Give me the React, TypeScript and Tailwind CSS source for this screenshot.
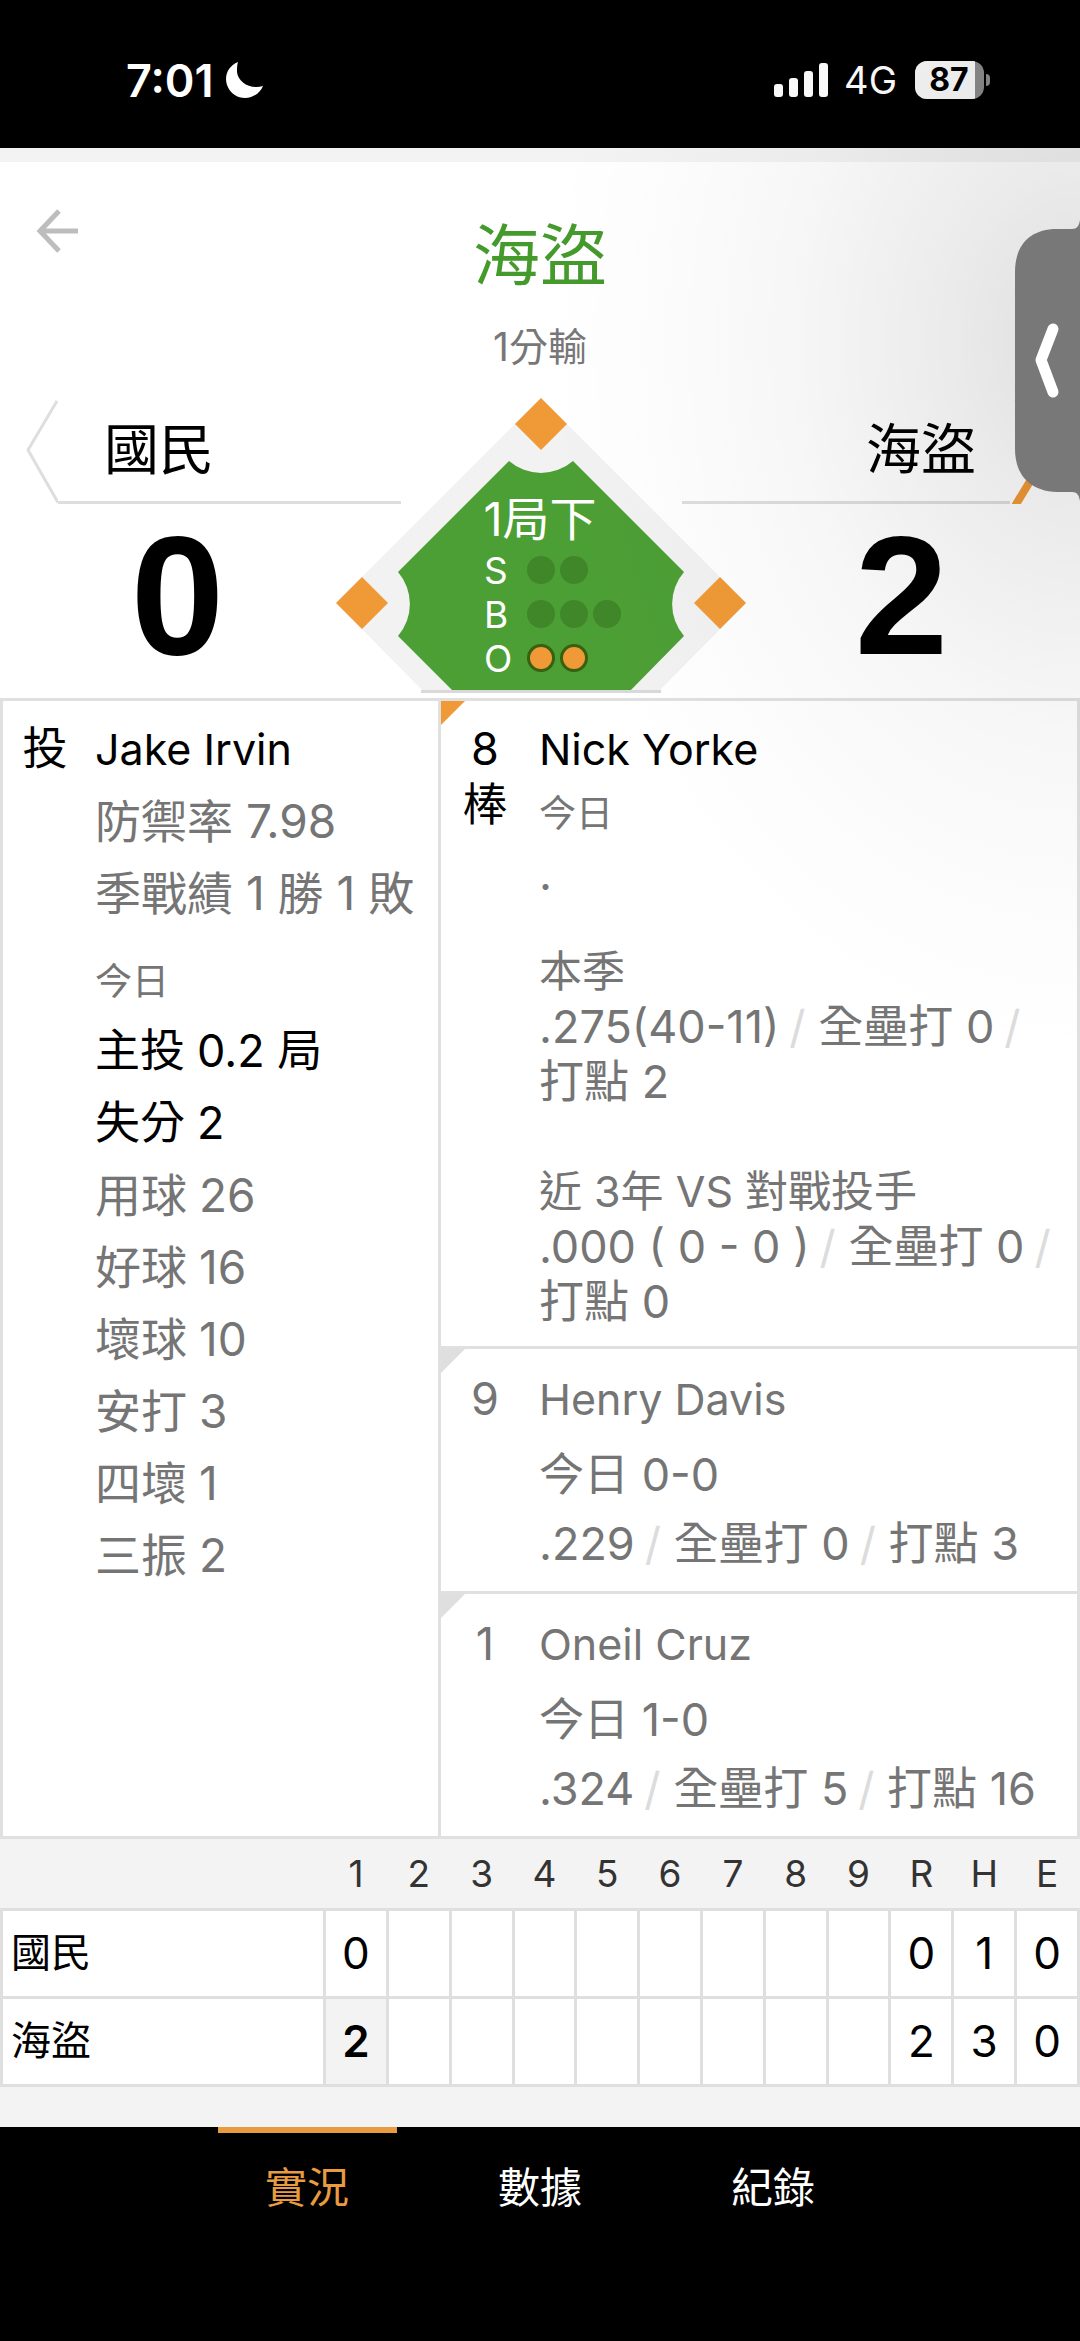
import React, { Fragment } from "react";

const pitcherToday = [
  { label: "主投", value: "0.2 局", strong: true },
  { label: "失分", value: "2", strong: true },
  { label: "用球", value: "26" },
  { label: "好球", value: "16" },
  { label: "壞球", value: "10" },
  { label: "安打", value: "3" },
  { label: "四壞", value: "1" },
  { label: "三振", value: "2" },
];

const onDeck = [
  { order: "9", name: "Henry Davis", today: "0-0", line: [".229", "全壘打 0", "打點 3"] },
  { order: "1", name: "Oneil Cruz", today: "1-0", line: [".324", "全壘打 5", "打點 16"] },
];

const innings = ["1", "2", "3", "4", "5", "6", "7", "8", "9"];

const teams = [
  { name: "國民", runs: ["0"], totals: ["0", "1", "0"], batting: false },
  { name: "海盜", runs: ["2"], totals: ["2", "3", "0"], batting: true },
];

function StatusBar() {
  return (
    <div className="flex h-[148px] items-center justify-between bg-black pt-3 pr-[90px] pl-[126px] text-white">
      <div className="flex items-center gap-3">
        <span className="text-[45px] leading-none font-semibold">7:01</span>
        <svg className="h-[38px] w-[38px]" viewBox="0 0 38 38" fill="white" aria-hidden="true">
          <path d="M13 1C3 5 -1 15 2 24C6 35 17 39 26 36C32 34 36 30 38 25C25 29 13 21 12 11C12 7 12 4 13 1Z" />
        </svg>
      </div>
      <div className="flex items-center">
        <svg className="h-[34px] w-[54px]" viewBox="0 0 54 34" fill="white" aria-hidden="true">
          <rect x="0" y="21" width="9" height="13" rx="3" />
          <rect x="15" y="15" width="9" height="19" rx="3" />
          <rect x="30" y="8" width="9" height="26" rx="3" />
          <rect x="45" y="0" width="9" height="34" rx="3" />
        </svg>
        <span className="ml-4 text-[38px] leading-none">4G</span>
        <div className="ml-[18px] flex h-[38px] w-[69px] overflow-hidden rounded-[12px] bg-[#8a8a8a]">
          <span className="flex w-[60px] items-center justify-center bg-[#f8f8f8] pl-2 text-[32px] leading-none font-bold text-black">
            87
          </span>
        </div>
        <span className="ml-[2px] h-3 w-1 rounded-r-full bg-[#8a8a8a]" />
      </div>
    </div>
  );
}

function Diamond() {
  const counts = [
    { label: "S", total: 2, on: false },
    { label: "B", total: 3, on: false },
    { label: "O", total: 2, on: true },
  ];
  return (
    <div className="absolute top-0 left-1/2 h-[296px] w-[412px] -translate-x-1/2">
      <svg className="absolute inset-0 h-full w-full" viewBox="0 0 412 296" aria-hidden="true">
        <path d="M207 0L412 205L325 293H89L2 205Z" fill="#f2f2f2" />
        <path
          d="M175 63A49 49 0 0 0 239 63L350 174A49 49 0 0 0 350 238L296 293H119L64 238A49 49 0 0 0 64 174Z"
          fill="#4c9f35"
        />
        <rect x="87" y="292" width="240" height="3" fill="#d9d9d9" />
        <g fill="#f09a37">
          <path d="M207 0L233 26L207 52L181 26Z" />
          <path d="M28 179L54 205L28 231L2 205Z" />
          <path d="M386 179L412 205L386 231L360 205Z" />
        </g>
      </svg>
      <div className="relative pt-[92px] text-white">
        <p className="text-center text-[47px] leading-[58px]">1局下</p>
        <dl className="pl-[150px]">
          {counts.map((c) => (
            <div key={c.label} className="flex h-[44px] items-center">
              <dt className="w-[43px] text-[37px] leading-none">{c.label}</dt>
              <dd className="flex gap-[5px]">
                {Array.from({ length: c.total }, (_, i) => (
                  <span
                    key={i}
                    className={
                      c.on
                        ? "h-7 w-7 rounded-full border-[3px] border-[#37600f] bg-[#f09a37]"
                        : "h-7 w-7 rounded-full bg-[#408729]"
                    }
                  />
                ))}
              </dd>
            </div>
          ))}
        </dl>
      </div>
    </div>
  );
}

function Header() {
  return (
    <header className="border-t-[14px] border-[#f3f3f3] bg-white">
      <div className="grid h-[236px] grid-cols-[1fr_auto_1fr]">
        <button type="button" aria-label="返回" className="mt-[46px] ml-[35px] h-[46px] w-[46px]">
          <svg viewBox="0 0 46 46" fill="none" stroke="#bdbdbd" strokeWidth="5" aria-hidden="true">
            <path d="M24 3L5 23L24 43M5 23H43" />
          </svg>
        </button>
        <div className="pt-[49px] text-center">
          <h1 className="text-[67px] leading-[90px] text-[#459a2c]">海盜</h1>
          <p className="pt-[22px] text-[39px] leading-[48px] text-[#777]">1分輸</p>
        </div>
      </div>
      <section className="relative grid h-[300px] grid-cols-2">
        <div>
          <div className="flex h-[106px] pr-[139px] pl-[26px]">
            <svg className="h-[106px] w-8 shrink-0" viewBox="0 0 32 106" fill="none" stroke="#dedede" strokeWidth="3" aria-hidden="true">
              <path d="M31 3L2 52L32 104.5" />
            </svg>
            <h2 className="flex-1 border-b-[3px] border-[#dedede] pl-[46px] text-[55px] leading-[103px]">國民</h2>
          </div>
          <p className="pt-[8px] pr-[185px] text-center font-['Liberation_Sans',sans-serif] text-[168px] leading-[168px] font-bold">0</p>
        </div>
        <div>
          <div className="flex h-[106px] pr-[26px] pl-[142px]">
            <h2 className="flex-1 border-b-[3px] border-[#dedede] pr-[34px] text-right text-[55px] leading-[103px]">海盜</h2>
            <svg className="h-[106px] w-11 shrink-0" viewBox="0 0 44 106" fill="none" stroke="#f09a37" strokeWidth="8" aria-hidden="true">
              <path d="M8 0L39 52L5 108" />
            </svg>
          </div>
          <p className="pt-[8px] pl-[183px] text-center font-['Liberation_Sans',sans-serif] text-[168px] leading-[168px] font-bold">2</p>
        </div>
        <Diamond />
      </section>
    </header>
  );
}

function StatLine({ parts }: { parts: string[] }) {
  return (
    <>
      {parts.map((part, i) => (
        <Fragment key={part}>
          <span className="whitespace-nowrap">
            {part}
            {i < parts.length - 1 && <span className="ml-[10px] text-[#dcdcdc]">/</span>}
          </span>
          {i < parts.length - 1 && " "}
        </Fragment>
      ))}
    </>
  );
}

function Corner({ active = false }: { active?: boolean }) {
  return (
    <svg className="absolute top-0 left-0 h-6 w-6" viewBox="0 0 24 24" aria-hidden="true">
      <path d="M0 0H24L0 24Z" fill={active ? "#f09a37" : "#dfdfdf"} />
    </svg>
  );
}

function Matchup() {
  return (
    <main className="grid grid-cols-[405fr_595fr] border-[3px] border-[#e0e0e0] bg-white text-[45px] text-[#757575]">
      <section className="flex gap-2 pt-5 text-[46px]">
        <span className="w-[84px] shrink-0 text-center text-[45px] leading-[56px] text-black">投</span>
        <div className="whitespace-nowrap">
          <h3 className="text-[43px] leading-[56px] text-black">Jake Irvin</h3>
          <p className="pt-2 leading-[72px]">防禦率 7.98</p>
          <p className="leading-[72px]">季戰績 1 勝 1 敗</p>
          <p className="pt-5 text-[37px] leading-[66px]">今日</p>
          <dl>
            {pitcherToday.map((s) => (
              <div key={s.label} className={s.strong ? "flex gap-3 text-[45px] leading-[72px] text-black" : "flex gap-3 leading-[72px]"}>
                <dt>{s.label}</dt>
                <dd>{s.value}</dd>
              </div>
            ))}
          </dl>
        </div>
      </section>
      <div className="border-l-[3px] border-[#e0e0e0]">
        <article className="relative flex gap-[10px] pt-5 pb-[17px]">
          <Corner active />
          <div className="w-[88px] shrink-0 text-center leading-[56px] text-black">
            8<br />棒
          </div>
          <div>
            <h3 className="text-[43px] leading-[56px] text-black">Nick Yorke</h3>
            <p className="text-[37px] leading-[74px]">今日</p>
            <p className="leading-[46px]">.</p>
            <h4 className="pt-[47px] text-[43px] leading-[55px]">本季</h4>
            <p className="leading-[55px]">
              <StatLine parts={[".275(40-11)", "全壘打 0", "打點 2"]} />
            </p>
            <h4 className="pt-[55px] text-[43px] leading-[55px]">近 3年 VS 對戰投手</h4>
            <p className="leading-[55px]">
              <StatLine parts={[".000 ( 0 - 0 )", "全壘打 0", "打點 0"]} />
            </p>
          </div>
        </article>
        {onDeck.map((b) => (
          <article key={b.order} className="relative flex gap-[10px] border-t-[3px] border-[#e0e0e0] pt-[10px] pb-[14px]">
            <Corner />
            <span className="w-[88px] shrink-0 text-center leading-[80px]">{b.order}</span>
            <div>
              <h3 className="text-[43px] leading-[80px]">{b.name}</h3>
              <p className="leading-[72px]">今日 {b.today}</p>
              <p className="leading-[66px]">
                <StatLine parts={b.line} />
              </p>
            </div>
          </article>
        ))}
      </div>
    </main>
  );
}

function LineScore() {
  return (
    <div className="bg-[#f3f3f3] pb-10">
      <table className="w-full table-fixed border-collapse text-center">
        <thead>
          <tr className="h-[70px] text-[37px] text-[#333]">
            <th className="w-[30%]" aria-label="球隊" />
            {[...innings, "R", "H", "E"].map((h) => (
              <th key={h} scope="col" className="p-0 leading-none font-normal">
                {h}
              </th>
            ))}
          </tr>
        </thead>
        <tbody>
          {teams.map((t) => (
            <tr key={t.name} className="h-[88px] bg-white text-[44px]">
              <th scope="row" className="border-[3px] border-[#dfdfdf] p-0 pl-2 text-left text-[40px] leading-none font-normal">
                {t.name}
              </th>
              {innings.map((n, i) => (
                <td
                  key={n}
                  className={
                    t.batting && i === 0
                      ? "border-[3px] border-[#dfdfdf] bg-[#f3f3f3] p-0 leading-none font-semibold"
                      : "border-[3px] border-[#dfdfdf] p-0 leading-none"
                  }
                >
                  {t.runs[i]}
                </td>
              ))}
              {t.totals.map((v, i) => (
                <td key={i} className="border-[3px] border-[#dfdfdf] p-0 leading-none">
                  {v}
                </td>
              ))}
            </tr>
          ))}
        </tbody>
      </table>
    </div>
  );
}

function TabBar() {
  const tabs = ["實況", "數據", "紀錄"];
  return (
    <nav className="flex min-h-[215px] flex-1 items-start justify-center gap-[54px] bg-black">
      {tabs.map((t, i) => (
        <a
          key={t}
          href="#"
          aria-current={i === 0 ? "page" : undefined}
          className={
            i === 0
              ? "w-[179px] border-t-[6px] border-[#e89b40] pt-[25px] text-center text-[42px] leading-[60px] text-[#e89b40]"
              : "w-[179px] border-t-[6px] border-transparent pt-[25px] text-center text-[42px] leading-[60px] text-white"
          }
        >
          {t}
        </a>
      ))}
    </nav>
  );
}

function SideHandle() {
  return (
    <>
      <div className="pointer-events-none absolute top-0 right-0 h-[1060px] w-[540px] bg-[radial-gradient(540px_720px_at_100%_340px,rgba(0,0,0,0.13)_0%,rgba(0,0,0,0.08)_25%,rgba(0,0,0,0.03)_55%,rgba(0,0,0,0.01)_80%,transparent_100%)]" />
      <button type="button" aria-label="開啟側欄" className="absolute top-[220px] right-0 h-[281px] w-[65px]">
        <svg className="h-full w-full" viewBox="0 0 65 281" aria-hidden="true">
          <path d="M65 0C64 6 62 9 57 9H42C14 9 0 26 0 52V229C0 254 14 271 42 272H57C62 272 64 275 65 281Z" fill="#787878" />
          <path d="M38 109L26 140L38 172" fill="none" stroke="white" strokeWidth="11" strokeLinecap="round" strokeLinejoin="round" />
        </svg>
      </button>
    </>
  );
}

export default function App() {
  return (
    <div
      lang="zh-Hant"
      className="relative flex min-h-screen flex-col bg-white font-['Inter','Noto_Sans_CJK_TC',sans-serif] text-black"
    >
      <StatusBar />
      <Header />
      <Matchup />
      <LineScore />
      <TabBar />
      <SideHandle />
    </div>
  );
}
